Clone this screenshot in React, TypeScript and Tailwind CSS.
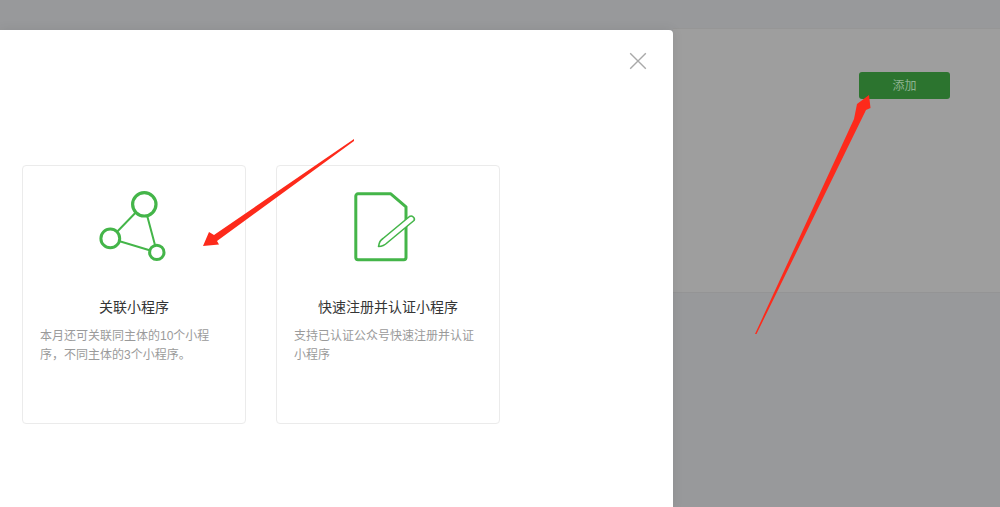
import React from 'react';

const FONT = 'font-["Liberation_Sans","Noto_Sans_CJK_SC",sans-serif]';

function LinkIcon() {
  return (
    <svg width="80" height="80" viewBox="94 186 80 80" fill="none" stroke="#44b549">
      <path d="M144 204 110.5 238.5 157 252.5Z" strokeWidth="2" />
      <circle cx="144.3" cy="204.3" r="11.7" strokeWidth="3.2" fill="#fff" />
      <circle cx="110.3" cy="238.4" r="9.4" strokeWidth="3" fill="#fff" />
      <circle cx="156.8" cy="252.4" r="7.2" strokeWidth="3" fill="#fff" />
    </svg>
  );
}

function DocIcon() {
  return (
    <svg width="80" height="80" viewBox="348 186 80 80" fill="none" stroke="#44b549">
      <path d="M358 193.8H390.8L406 206.8V257.5a2.2 2.2 0 0 1-2.2 2.2H358a2.2 2.2 0 0 1-2.2-2.2V196a2.2 2.2 0 0 1 2.2-2.2Z" strokeWidth="3" strokeLinejoin="round" />
      <path d="M378.5 246.5C379 243 380.5 240 383 238.5L409.5 216.5C412 215 415.5 218 414 220.5L387.5 242.5C385 245 381.5 246.5 378.5 246.5Z" strokeWidth="1.6" strokeLinejoin="round" fill="#fff" />
    </svg>
  );
}

const CARDS = [
  {
    title: '关联小程序',
    desc: '本月还可关联同主体的10个小程序，不同主体的3个小程序。',
    icon: <LinkIcon />,
  },
  {
    title: '快速注册并认证小程序',
    desc: '支持已认证公众号快速注册并认证小程序',
    icon: <DocIcon />,
  },
];

export default function App() {
  return (
    <div className={`relative flex h-[507px] w-[1000px] overflow-hidden bg-[#98999b] ${FONT}`}>
      {/* Modal */}
      <div className="z-10 mt-[30px] w-[673px] flex-none rounded-tr-[4px] bg-white shadow-[0_0_12px_rgba(0,0,0,0.08)]">
        <div className="flex h-[135px] justify-end pr-[26px] pt-[22px]">
          <svg width="18" height="18" viewBox="0 0 18 18" stroke="#a9a9a9" strokeWidth="1.4">
            <path d="M1.2 1.2 16.8 16.8M16.8 1.2 1.2 16.8" />
          </svg>
        </div>
        <div className="flex gap-[30px] pl-[22px]">
          {CARDS.map(card => (
            <div key={card.title} className="h-[259px] w-[224px] rounded-[4px] border border-[#ebebeb] bg-white">
              <div className="flex justify-center pt-[20px]">{card.icon}</div>
              <p className="mt-[31px] text-center text-[14px] leading-[20px] text-[#353535]">{card.title}</p>
              <p className="mt-[10px] pl-[17px] pr-[25px] text-[12px] leading-[19px] text-[#9a9a9a]">{card.desc}</p>
            </div>
          ))}
        </div>
      </div>

      {/* Dimmed page */}
      <div className="flex min-w-0 flex-1 flex-col">
        <div className="h-[29px] border-b border-[#969696]" />
        <div className="h-[264px] border-b border-[#949495] bg-[#9e9e9e] pl-[186px] pt-[43px]">
          <button className="flex h-[27px] w-[91px] items-center justify-center rounded-[3px] bg-[#2c742f] text-[12px] text-[#8fb392]">
            添加
          </button>
        </div>
      </div>

      {/* Red annotation arrows */}
      <svg className="pointer-events-none absolute left-0 top-0 z-20" width="1000" height="507" fill="#fd2a1b">
        <polygon points="354,139 214,235 209,232 203,246 219,244.5 217,241 354,141" />
        <polygon points="755,334 854,119 857,104 869,95 870.5,108 866,110 756.5,334" />
      </svg>
    </div>
  );
}
